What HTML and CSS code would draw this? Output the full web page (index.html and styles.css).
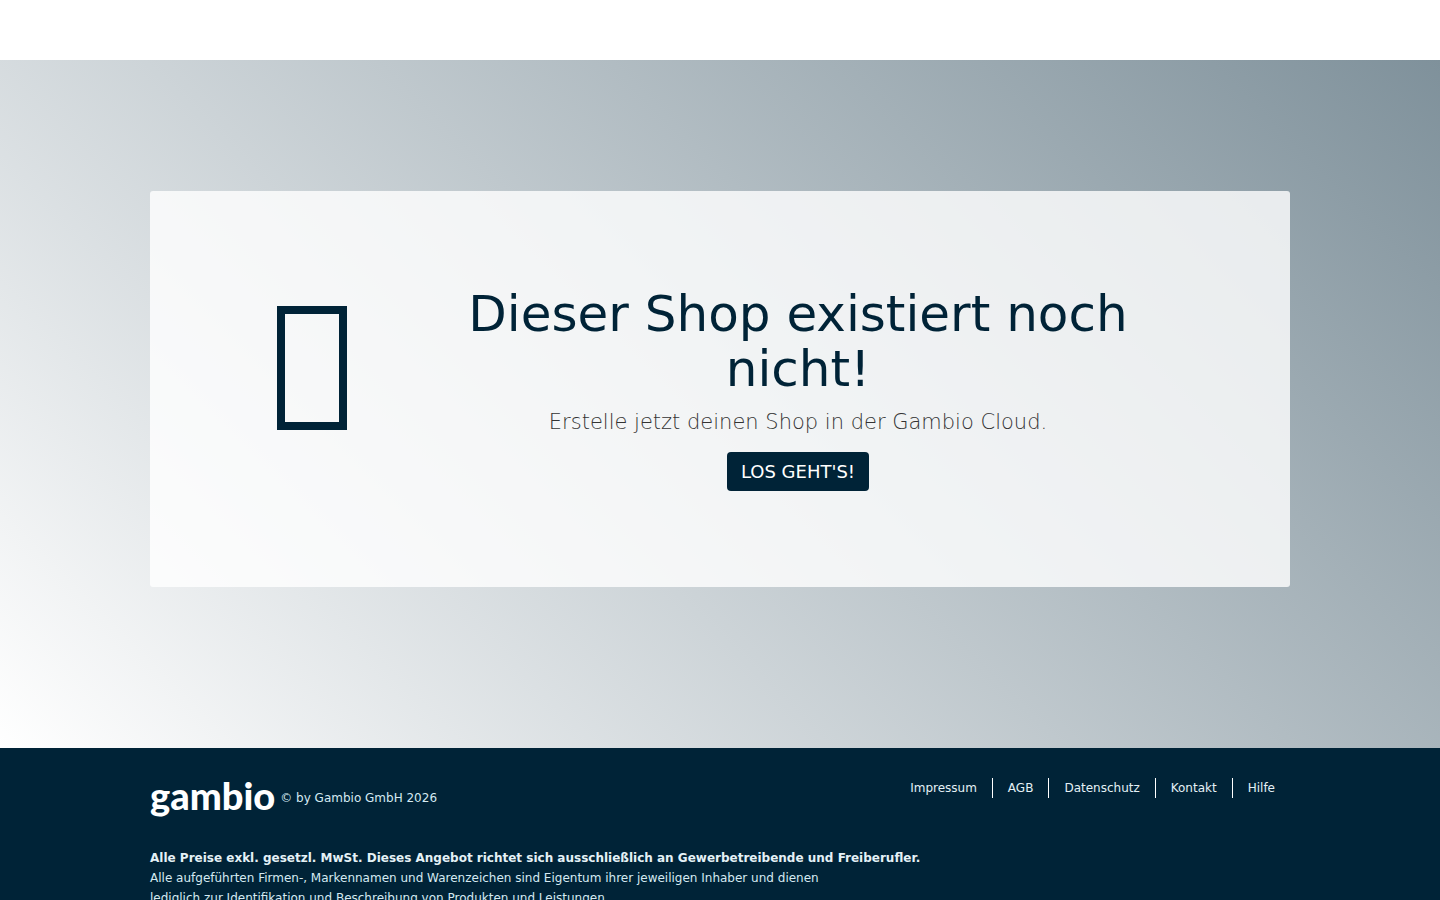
FILE: index.html
```html
<!DOCTYPE html>
<html lang="de">
<head>
    <meta charset="UTF-8">
    <meta name="viewport" content="width=device-width, initial-scale=1.0">
    <title>Gambio Cloud</title>
    <link rel="stylesheet" href="styles.css">
</head>
<body>

    <header class="header"></header>

    <main class="main">
        <div class="container">
            <section class="message-box">
                <div class="message-icon">
                    <svg width="70" height="124" viewBox="0 0 70 124" aria-hidden="true">
                        <rect x="4" y="4" width="62" height="116" fill="none" stroke="#002337" stroke-width="8"/>
                    </svg>
                </div>
                <div class="message-text">
                    <h1>Dieser Shop existiert noch nicht!</h1>
                    <p>Erstelle jetzt deinen Shop in der Gambio Cloud.</p>
                    <a class="btn" href="#">LOS GEHT'S!</a>
                </div>
            </section>
        </div>
    </main>

    <footer class="footer">
        <div class="container">
            <div class="footer-top">
                <div class="footer-brand">
                    <a class="logo" href="#">gambio</a>
                    <span>© by Gambio GmbH 2026</span>
                </div>
                <nav class="footer-nav">
                    <a href="#">Impressum</a>
                    <a href="#">AGB</a>
                    <a href="#">Datenschutz</a>
                    <a href="#">Kontakt</a>
                    <a href="#">Hilfe</a>
                </nav>
            </div>
            <p class="footer-legal">
                <strong>Alle Preise exkl. gesetzl. MwSt. Dieses Angebot richtet sich ausschließlich an Gewerbetreibende und Freiberufler.</strong><br>
                Alle aufgeführten Firmen-, Markennamen und Warenzeichen sind Eigentum ihrer jeweiligen Inhaber und dienen<br>
                lediglich zur Identifikation und Beschreibung von Produkten und Leistungen.
            </p>
        </div>
    </footer>

</body>
</html>
```

FILE: styles.css
```css
* {
    box-sizing: border-box;
}

body {
    margin: 0;
    font-family: 'DejaVu Sans', sans-serif;
    font-size: 12px;
    line-height: 20px;
    color: #333;
    background-color: #fff;
}

.container {
    max-width: 1170px;
    margin: 0 auto;
    padding: 0 15px;
}

.header {
    height: 60px;
    background-color: #fff;
}

.main {
    padding: 131px 0 161px;
    background: linear-gradient(45deg, #fff, #7f919b);
}

.message-box {
    display: grid;
    grid-template-columns: 284px 1fr;
    padding: 96px 148px 96px 20px;
    background-color: rgba(255, 255, 255, 0.8);
    border-radius: 3px;
}

.message-icon {
    padding-top: 19px;
    text-align: center;
}

.message-text {
    text-align: center;
}

.message-text h1 {
    margin: 0 0 10px;
    font-size: 50px;
    font-weight: 400;
    line-height: 55px;
    color: #002337;
}

.message-text p {
    margin: 0 0 15px;
    font-size: 21px;
    font-weight: 200;
    line-height: 30px;
}

.btn {
    display: inline-block;
    padding: 7px 14px;
    font-size: 18px;
    line-height: 25px;
    color: #fff;
    background-color: #002337;
    border-radius: 4px;
    text-decoration: none;
}

.footer {
    padding: 30px 0;
    color: #d5eaf2;
    background-color: #002337;
}

.footer-top {
    display: flex;
    justify-content: space-between;
    align-items: flex-start;
}

.footer-brand {
    display: flex;
    align-items: center;
    gap: 5px;
    height: 40px;
}

.logo {
    align-self: flex-start;
    font-family: Lato, sans-serif;
    font-size: 38px;
    font-weight: 900;
    line-height: 34px;
    color: #fff;
    text-decoration: none;
}

.footer-nav {
    display: flex;
}

.footer-nav a {
    padding: 0 15px;
    color: #e4f1f6;
    text-decoration: none;
}

.footer-nav a + a {
    border-left: 1px solid #fff;
}

.footer-legal {
    margin: 30px 0 0;
}

.footer-legal strong {
    color: #e4f1f6;
}
```
